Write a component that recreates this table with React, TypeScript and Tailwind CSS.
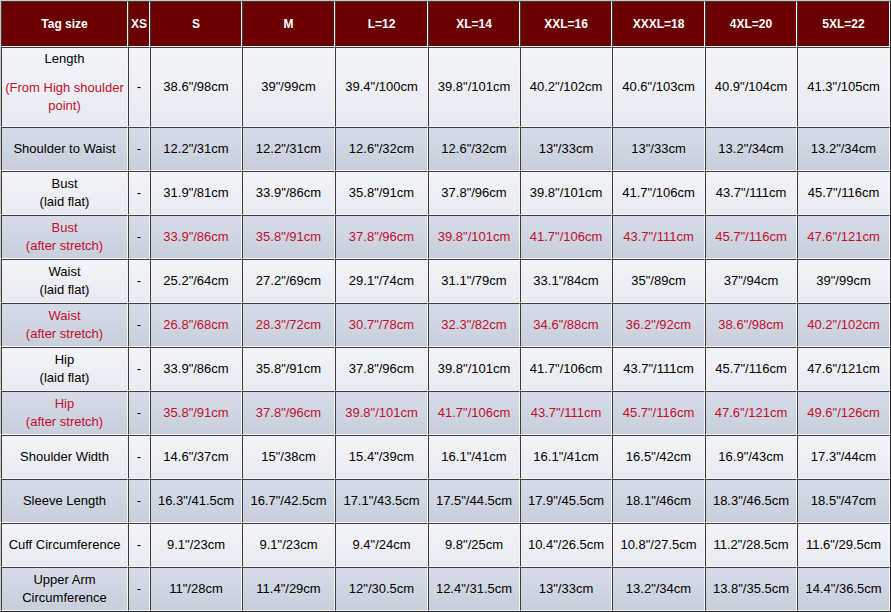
const sizes = ['XS', 'S', 'M', 'L=12', 'XL=14', 'XXL=16', 'XXXL=18', '4XL=20', '5XL=22']

type Row = {
  label: string[]
  red?: boolean
  dark?: boolean
  values: string[]
}

const rows: Row[] = [
  {
    label: ['Shoulder to Waist'],
    dark: true,
    values: ['12.2"/31cm', '12.2"/31cm', '12.6"/32cm', '12.6"/32cm', '13"/33cm', '13"/33cm', '13.2"/34cm', '13.2"/34cm'],
  },
  {
    label: ['Bust', '(laid flat)'],
    values: ['31.9"/81cm', '33.9"/86cm', '35.8"/91cm', '37.8"/96cm', '39.8"/101cm', '41.7"/106cm', '43.7"/111cm', '45.7"/116cm'],
  },
  {
    label: ['Bust', '(after stretch)'],
    red: true,
    dark: true,
    values: ['33.9"/86cm', '35.8"/91cm', '37.8"/96cm', '39.8"/101cm', '41.7"/106cm', '43.7"/111cm', '45.7"/116cm', '47.6"/121cm'],
  },
  {
    label: ['Waist', '(laid flat)'],
    values: ['25.2"/64cm', '27.2"/69cm', '29.1"/74cm', '31.1"/79cm', '33.1"/84cm', '35"/89cm', '37"/94cm', '39"/99cm'],
  },
  {
    label: ['Waist', '(after stretch)'],
    red: true,
    dark: true,
    values: ['26.8"/68cm', '28.3"/72cm', '30.7"/78cm', '32.3"/82cm', '34.6"/88cm', '36.2"/92cm', '38.6"/98cm', '40.2"/102cm'],
  },
  {
    label: ['Hip', '(laid flat)'],
    values: ['33.9"/86cm', '35.8"/91cm', '37.8"/96cm', '39.8"/101cm', '41.7"/106cm', '43.7"/111cm', '45.7"/116cm', '47.6"/121cm'],
  },
  {
    label: ['Hip', '(after stretch)'],
    red: true,
    dark: true,
    values: ['35.8"/91cm', '37.8"/96cm', '39.8"/101cm', '41.7"/106cm', '43.7"/111cm', '45.7"/116cm', '47.6"/121cm', '49.6"/126cm'],
  },
  {
    label: ['Shoulder Width'],
    values: ['14.6"/37cm', '15"/38cm', '15.4"/39cm', '16.1"/41cm', '16.1"/41cm', '16.5"/42cm', '16.9"/43cm', '17.3"/44cm'],
  },
  {
    label: ['Sleeve Length'],
    dark: true,
    values: ['16.3"/41.5cm', '16.7"/42.5cm', '17.1"/43.5cm', '17.5"/44.5cm', '17.9"/45.5cm', '18.1"/46cm', '18.3"/46.5cm', '18.5"/47cm'],
  },
  {
    label: ['Cuff Circumference'],
    values: ['9.1"/23cm', '9.1"/23cm', '9.4"/24cm', '9.8"/25cm', '10.4"/26.5cm', '10.8"/27.5cm', '11.2"/28.5cm', '11.6"/29.5cm'],
  },
  {
    label: ['Upper Arm', 'Circumference'],
    dark: true,
    values: ['11"/28cm', '11.4"/29cm', '12"/30.5cm', '12.4"/31.5cm', '13"/33cm', '13.2"/34cm', '13.8"/35.5cm', '14.4"/36.5cm'],
  },
]

const lengthValues = ['38.6"/98cm', '39"/99cm', '39.4"/100cm', '39.8"/101cm', '40.2"/102cm', '40.6"/103cm', '40.9"/104cm', '41.3"/105cm']

const cell = 'flex flex-col items-center justify-center text-center border-t border-l border-t-[#3c3c3c] border-l-[#3c3c3c] border-b border-r border-b-[#f6f6f6] border-r-[#f6f6f6]'
const light = 'bg-linear-to-b from-[#f4f5f9] to-[#e7eaf1]'
const dark = 'bg-linear-to-b from-[#d6dce7] to-[#c8cfdc]'

function Cells({ values, bg, red, h }: { values: string[]; bg: string; red?: boolean; h: string }) {
  return (
    <>
      <div className={`${cell} ${bg} ${h} text-black`}>-</div>
      {values.map((v, i) => (
        <div key={i} className={`${cell} ${bg} ${h} ${red ? 'text-[#c20f2c]' : 'text-black'}`}>
          {v}
        </div>
      ))}
    </>
  )
}

export default function App() {
  return (
    <div className="w-[891px] h-[612px] bg-white font-['Liberation_Sans',Arial,sans-serif] text-[13px] leading-[18px]">
      <div className="border-t border-l border-t-[#c9c9c9] border-l-[#c9c9c9] border-b border-r border-b-[#222] border-r-[#222] grid grid-cols-[127px_22px_92px_93px_93px_92px_92px_93px_92px_93px]">
        <div className={`${cell} h-[46px] bg-[#6b0000] text-white font-bold text-[12px] border-r-[#d8cccc] border-b-[#d8cccc]`}>
          Tag size
        </div>
        {sizes.map((s) => (
          <div key={s} className={`${cell} h-[46px] bg-[#6b0000] text-white font-bold text-[12px] border-r-[#d8cccc] border-b-[#d8cccc]`}>
            {s}
          </div>
        ))}

        <div className={`${cell} ${light} h-[80px] !justify-start pt-[2px]`}>
          <span className="text-black">Length</span>
          <span className="mt-[11px] text-[#c20f2c]">(From High shoulder point)</span>
        </div>
        <Cells values={lengthValues} bg={light} h="h-[80px]" />

        {rows.map((r) => (
          <div key={r.label.join(' ') + (r.red ? 'r' : '')} className="contents">
            <div className={`${cell} ${r.dark ? dark : light} h-[44px] ${r.red ? 'text-[#c20f2c]' : 'text-black'}`}>
              {r.label.map((l) => (
                <span key={l}>{l}</span>
              ))}
            </div>
            <Cells values={r.values} bg={r.dark ? dark : light} red={r.red} h="h-[44px]" />
          </div>
        ))}
      </div>
    </div>
  )
}
